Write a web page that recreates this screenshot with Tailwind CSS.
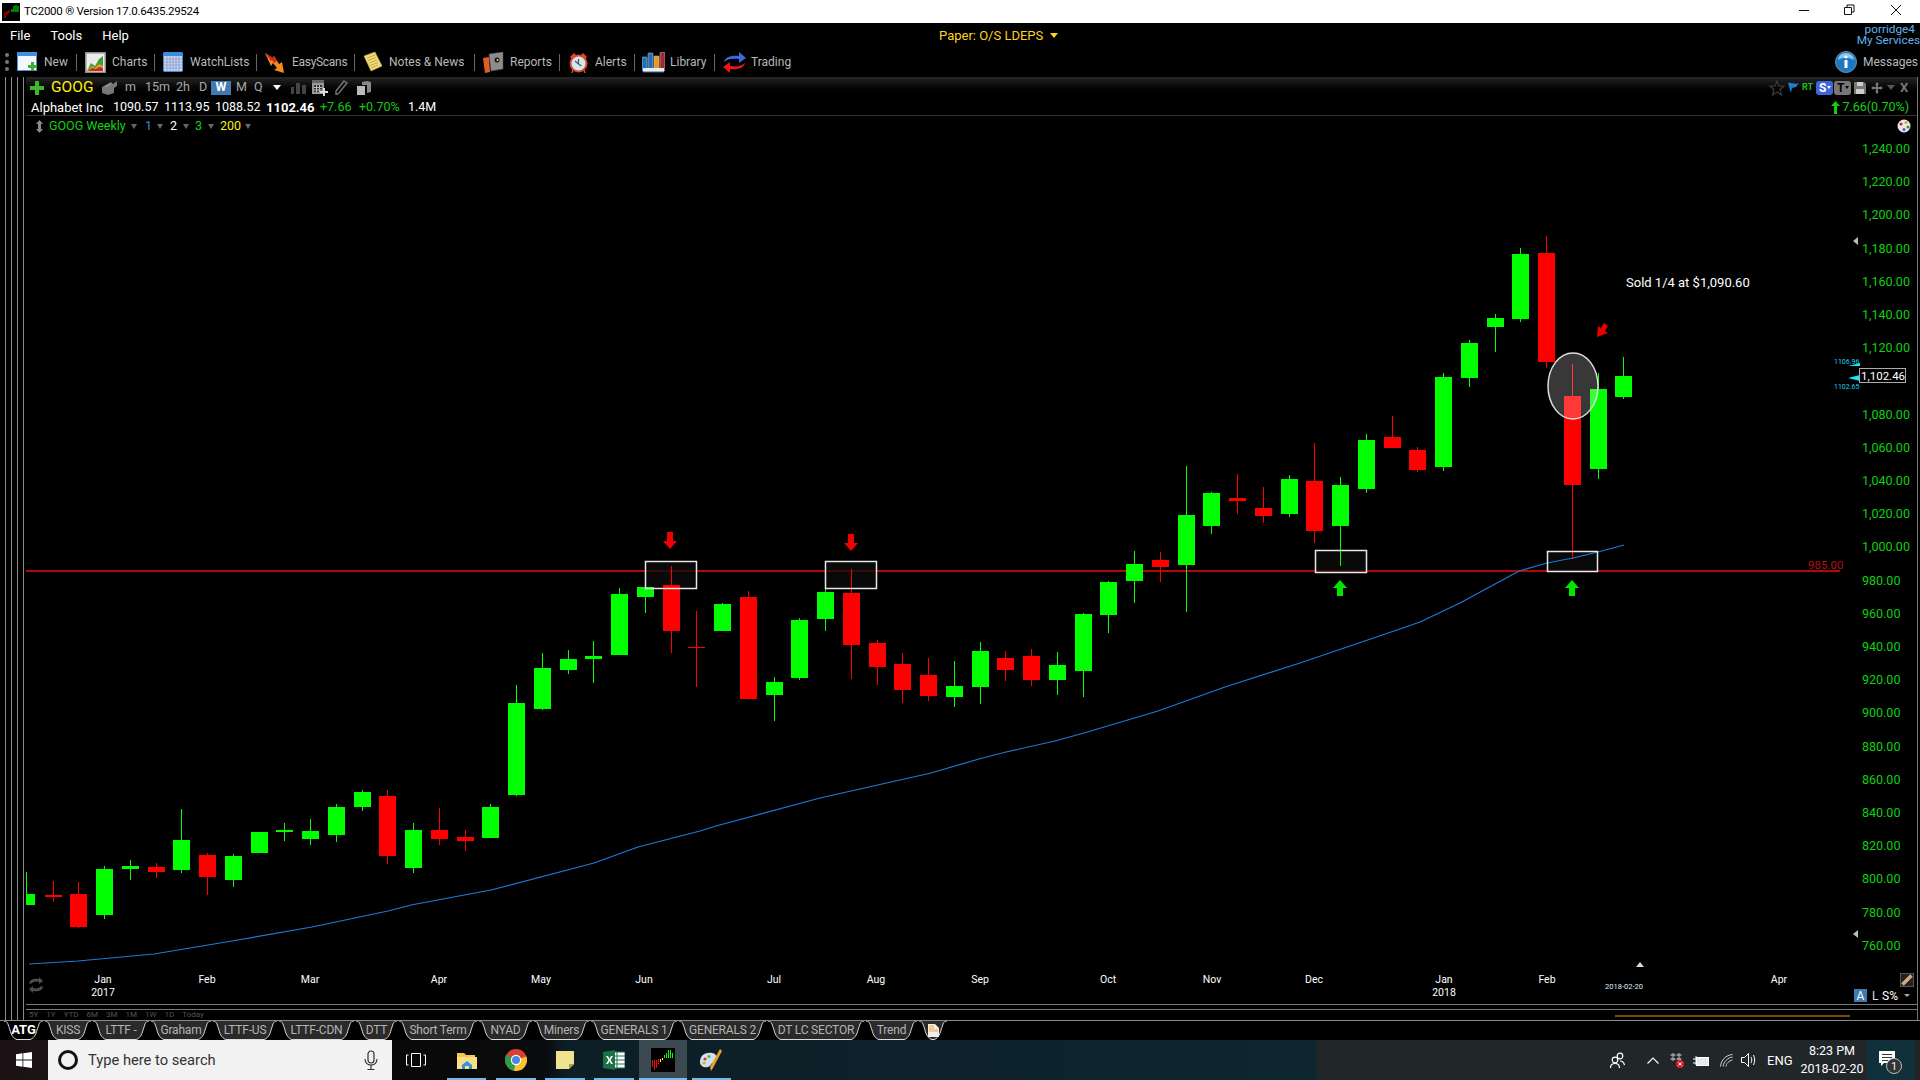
<!DOCTYPE html>
<html lang="en">

<head>
  <meta charset="UTF-8">
  <title>TC2000</title>
  <script src="https://cdn.jsdelivr.net/npm/@tailwindcss/browser@4"></script>
</head>

<body class="bg-black">
  <div class="w-[1920px] h-[1080px] overflow-hidden flex flex-col bg-black text-white text-[13px] leading-none whitespace-nowrap font-['Roboto',sans-serif]">

    <!-- title bar -->
    <div class="h-[23px] shrink-0 bg-white text-black flex items-center relative">
      <svg class="ml-[2px] w-[18px] h-[18px]" viewBox="0 0 18 18">
        <rect width="18" height="18" fill="#000" />
        <path d="M3 9v6M5 8v4M7 7v3" stroke="#f00" stroke-width="1" />
        <path d="M10 6v3M12 3v6M14 2v7M16 3v6" stroke="#0f0" stroke-width="1" />
      </svg>
      <span class="ml-[4px] text-[11.5px] tracking-[-0.25px]">TC2000 ® Version 17.0.6435.29524</span>
      <svg class="absolute left-[1799px] top-0 w-[110px] h-[23px]" viewBox="1799 0 110 23" fill="none" stroke="#111">
        <path d="M1799 10.5h10" />
        <path d="M1844.5 7.5h7v7h-7zM1847 7.5v-2.5h7v7h-2.5" />
        <path d="M1891 5l10 10M1901 5l-10 10" />
      </svg>
    </div>

    <!-- menu -->
    <div class="h-[23px] shrink-0 flex items-center relative pt-[2px] text-[13px] text-white">
      <span class="ml-[10px]">File</span>
      <span class="ml-[20px]">Tools</span>
      <span class="ml-[20px]">Help</span>
      <span class="absolute left-[939px] top-[6px] text-[#ffd21f]">Paper: O/S LDEPS</span>
      <span class="absolute left-[1050px] top-[10px] w-0 h-0 border-x-[4px] border-x-transparent border-t-[5px] border-t-[#ffd21f]"></span>
      <div class="absolute right-0 top-[1px] flex flex-col items-end text-[11.8px] text-[#62b1ef] leading-[11px]">
        <span class="mr-[5px]">porridge4</span>
        <span>My Services</span>
      </div>
    </div>

    <!-- toolbar -->
    <div class="h-[31px] shrink-0 flex items-center pt-px text-[12px] text-[#b9b9b9]">
      <div class="ml-[5px] w-[12px] flex flex-col gap-[3px]">
        <span class="w-[4px] h-[4px] rounded-full bg-[#777]"></span>
        <span class="w-[4px] h-[4px] rounded-full bg-[#777]"></span>
        <span class="w-[4px] h-[4px] rounded-full bg-[#777]"></span>
      </div>
      <!-- New -->
      <svg class="w-[20px] h-[20px]" viewBox="0 0 20 20">
        <rect x=".5" y=".5" width="19" height="18" fill="#f4f8fc" stroke="#4a90d9" />
        <rect x="1" y="1" width="18" height="3" fill="#3d8ee0" />
        <path d="M14 10h3v3h3v3h-3v3h-3v-3h-3v-3h3z" fill="#3aae3a" />
      </svg>
      <span class="ml-[7px] w-[24px]">New</span>
      <span class="ml-[8px] w-px h-[17px] bg-[#666]"></span>
      <!-- Charts -->
      <svg class="ml-[8px] w-[21px] h-[21px]" viewBox="0 0 21 21">
        <rect width="21" height="21" fill="#8c8c8c" />
        <rect x="1.500" y="1.500" width="18" height="18" fill="#ececec" />
        <path d="M2 19L6 11l4 3 4-7 4-3v15z" fill="#3f9e3a" />
        <path d="M2 19l5-5 3 2 4-4 4 2v5z" fill="#e8a01e" />
        <path d="M3 19l4-3 4 1 3-2 4 1v3z" fill="#c92a1c" />
      </svg>
      <span class="ml-[6px] w-[34px]">Charts</span>
      <span class="ml-[8px] w-px h-[17px] bg-[#666]"></span>
      <!-- WatchLists -->
      <svg class="ml-[8px] w-[20px] h-[20px]" viewBox="0 0 20 20">
        <rect x=".5" y=".5" width="19" height="19" rx="1" fill="#c9d6ee" stroke="#3a8ddb" />
        <rect x="1" y="1" width="18" height="3" fill="#3a8ddb" />
        <path d="M1 7h18M1 10h18M1 13h18M1 16h18M4 4v15M7 4v15M10 4v15M13 4v15M16 4v15" stroke="#8e99c9" stroke-width=".8" />
      </svg>
      <span class="ml-[7px] w-[56px]">WatchLists</span>
      <span class="ml-[10px] w-px h-[17px] bg-[#666]"></span>
      <!-- EasyScans -->
      <svg class="ml-[8px] w-[21px] h-[21px]" viewBox="0 0 21 21">
        <path d="M0 1l8 5 1-2 5 8 3-2 2 11-10-3 3-2-4-5-2 3z" fill="#f58a1f" />
        <path d="M0 1l8 5 1-2 3 5-3 2-2-3-1 1z" fill="#d8261b" />
      </svg>
      <span class="ml-[6px] w-[52px] tracking-[-0.3px]">EasyScans</span>
      <span class="ml-[10px] w-px h-[17px] bg-[#666]"></span>
      <!-- Notes -->
      <svg class="ml-[8px] w-[20px] h-[20px]" viewBox="0 0 20 20">
        <path d="M1 4l11-4 7 14-11 5z" fill="#f0dc7c" stroke="#c8a93c" stroke-width=".6" />
        <path d="M4 6l8-3M5 8.500l8-3M6 11l8-3M7 13.500l8-3M8 16l7-3" stroke="#b9953a" stroke-width=".8" />
      </svg>
      <span class="ml-[6px] w-[76px]">Notes &amp; News</span>
      <span class="ml-[9px] w-px h-[17px] bg-[#666]"></span>
      <!-- Reports -->
      <svg class="ml-[8px] w-[21px] h-[21px]" viewBox="0 0 21 21">
        <path d="M0 6l6-1 1 15-5 1z" fill="#e25b25" />
        <path d="M6 2l14-2v17L8 19z" fill="#8c8c8c" stroke="#555" stroke-width=".5" />
        <circle cx="14" cy="8" r="2.500" fill="#111" />
        <circle cx="14.500" cy="8" r="1" fill="#ddd" />
      </svg>
      <span class="ml-[6px] w-[41px]">Reports</span>
      <span class="ml-[8px] w-px h-[17px] bg-[#666]"></span>
      <!-- Alerts -->
      <svg class="ml-[9px] w-[19px] h-[21px]" viewBox="0 0 19 21">
        <circle cx="9.500" cy="11.500" r="8" fill="#cfe6f3" stroke="#e2482a" stroke-width="2" />
        <path d="M1 5l4-4 2 2-4 4zM18 5l-4-4-2 2 4 4z" fill="#e2482a" />
        <path d="M9.500 7v5l3 2M9.500 12L6 9" stroke="#555" fill="none" stroke-width="1.200" />
        <path d="M4 18l-1 3M15 18l1 3" stroke="#e2482a" stroke-width="1.500" />
      </svg>
      <span class="ml-[7px] w-[30px]">Alerts</span>
      <span class="ml-[9px] w-px h-[17px] bg-[#666]"></span>
      <!-- Library -->
      <svg class="ml-[7px] w-[23px] h-[21px]" viewBox="0 0 23 21">
        <rect x="0" y="5" width="5" height="14" rx="1" fill="#1f6fb8" stroke="#cfd7de" stroke-width=".5" />
        <rect x="6" y="1" width="5" height="18" rx="1" fill="#1f6fb8" stroke="#cfd7de" stroke-width=".5" />
        <rect x="12" y="4" width="5" height="15" rx="1" fill="#f09420" stroke="#cfd7de" stroke-width=".5" />
        <rect x="18" y="0" width="5" height="19" rx="1" fill="#a32828" stroke="#cfd7de" stroke-width=".5" />
        <path d="M1 16h21v4H1z" fill="#ececec" />
        <path d="M1 20h21" stroke="#1f6fb8" />
      </svg>
      <span class="ml-[5px] w-[36px]">Library</span>
      <span class="ml-[8px] w-px h-[17px] bg-[#666]"></span>
      <!-- Trading -->
      <svg class="ml-[8px] w-[23px] h-[21px]" viewBox="0 0 23 21">
        <path d="M1 10C2 5 8 3 16 4V0l7 6-7 5V7C9 6 4 7 1 10z" fill="#3b6ae0" />
        <path d="M22 11c-1 5-7 7-15 6v4l-7-6 7-5v4c7 1 12 0 15-3z" fill="#f01414" />
      </svg>
      <span class="ml-[5px]">Trading</span>
      <!-- Messages -->
      <svg class="ml-auto w-[22px] h-[22px]" viewBox="0 0 22 22">
        <circle cx="11" cy="11" r="10.500" fill="#1c78c0" stroke="#6c8fa8" />
        <path d="M3 9a8 7 0 0 1 16 0c-5-3-11-3-16 0z" fill="#8ec4e8" />
        <circle cx="11" cy="6" r="1.600" fill="#fff" />
        <rect x="9.500" y="9" width="3" height="8" fill="#fff" />
      </svg>
      <span class="ml-[6px] mr-[5px] w-[52px]">Messages</span>
    </div>

    <!-- main: side rails and chart window -->
    <div class="flex-1 min-h-0 flex relative">
      <div class="w-[26px] shrink-0 relative">
        <span class="absolute left-[5px] top-0 bottom-0 w-px bg-[#8a8a8a]"></span>
        <span class="absolute left-[11px] top-0 bottom-0 w-px bg-[#8a8a8a]"></span>
        <span class="absolute left-[17px] top-0 bottom-0 w-px bg-[#8a8a8a]"></span>
        <span class="absolute left-[23px] top-0 bottom-0 w-px bg-[#8a8a8a]"></span>
      </div>
      <div class="flex-1 min-w-0 flex flex-col border-r border-r-[#777] mr-[2px]">

        <!-- symbol row -->
        <div class="h-[20px] shrink-0 flex items-center pt-px bg-linear-to-b from-[#262626] to-black text-[#a8a8a8] text-[12.5px]">
          <svg class="ml-[4px] w-[14px] h-[14px]" viewBox="0 0 14 14">
            <path d="M5 0h4v5h5v4H9v5H5V9H0V5h5z" fill="#3dba2a" />
          </svg>
          <span class="ml-[7px] w-[44px] text-[15.5px] text-[#ffee10]">GOOG</span>
          <svg class="ml-[7px] w-[15px] h-[14px]" viewBox="0 0 15 14">
            <path d="M0 6l9-5 2 2 4-3v5l-3 2v5l-6 2-6-2z" fill="#777" />
            <path d="M3 6l6-3" stroke="#aaa" />
          </svg>
          <span class="ml-[8px] w-[11px]">m</span>
          <span class="ml-[9px] w-[23px]">15m</span>
          <span class="ml-[8px] w-[14px]">2h</span>
          <span class="ml-[9px] w-[9px]">D</span>
          <span class="ml-[3px] w-[20px] h-[14px] bg-[#3f7ab0] text-white font-bold flex items-center justify-center">W</span>
          <span class="ml-[5px] w-[11px]">M</span>
          <span class="ml-[7px] w-[10px]">Q</span>
          <span class="ml-[9px] w-0 h-0 border-x-[4px] border-x-transparent border-t-[5px] border-t-white"></span>
          <svg class="ml-[10px] w-[15px] h-[12px]" viewBox="0 0 15 12" fill="#444">
            <rect x="0" y="5" width="3" height="7" />
            <rect x="5" y="1" width="4" height="11" />
            <rect x="11" y="3" width="4" height="9" />
          </svg>
          <svg class="ml-[6px] w-[16px] h-[16px]" viewBox="0 0 16 16">
            <rect x="0" y="0" width="12" height="14" fill="#999" />
            <rect x="0" y="0" width="12" height="3" fill="#666" />
            <path d="M2 5h8v7H2z" fill="#333" />
            <path d="M2 7.500h8M2 10h8M4.500 5v7M7.500 5v7" stroke="#bbb" />
            <path d="M11 8h2v3h3v2h-3v3h-2v-3H8v-2h3z" fill="#ddd" />
          </svg>
          <svg class="ml-[7px] w-[13px] h-[15px]" viewBox="0 0 13 15">
            <path d="M9 1l3 2-8 10-3 2 0-4z" fill="none" stroke="#777" stroke-width="1.400" />
          </svg>
          <svg class="ml-[9px] w-[14px] h-[14px]" viewBox="0 0 14 14">
            <path d="M0 5h8v9H0z" fill="#bbb" />
            <path d="M5 1l5-1 4 1v10l-4 1V4L5 4z" fill="#888" />
          </svg>
          <div class="ml-auto flex items-center relative">
            <svg class="w-[16px] h-[16px]" viewBox="0 0 16 16">
              <path d="M8 1l2 5h5l-4 3.500 1.500 5.500L8 12l-4.500 3L5 9.500 1 6h5z" fill="none" stroke="#3c3c3c" stroke-width="1.200" />
            </svg>
            <svg class="ml-[3px] w-[11px] h-[11px]" viewBox="0 0 11 11">
              <path d="M0 1c3-1 7 2 11 0L8 5l-4 1-1 5z" fill="#1d7fd0" />
            </svg>
            <span class="ml-[3px] w-[11px] text-[9px] text-[#18c018] font-bold">RT</span>
            <span class="ml-[3px] w-[17px] h-[14px] rounded-[3px] bg-[#3f66d8] text-white text-[12px] font-bold flex items-center pl-[3px]">S<span class="ml-px w-0 h-0 border-x-[2px] border-x-transparent border-t-[3px] border-t-white"></span></span>
            <span class="ml-px w-[17px] h-[14px] rounded-[3px] bg-[#777] text-black text-[12px] font-bold flex items-center pl-[3px]">T<span class="ml-px w-0 h-0 border-x-[2px] border-x-transparent border-t-[3px] border-t-black"></span></span>
            <svg class="ml-[3px] w-[12px] h-[12px]" viewBox="0 0 12 12">
              <path d="M0 0h10l2 2v10H0z" fill="#777" />
              <path d="M3 0h6v4H3zM2 7h8v5H2z" fill="#ccc" />
            </svg>
            <svg class="ml-[5px] w-[12px] h-[12px]" viewBox="0 0 12 12">
              <path d="M6 0l2 2.500H7V5h2.500V4L12 6 9.500 8V7H7v2.500h1L6 12 4 9.500h1V7H2.500v1L0 6l2.500-2v1H5V2.500H4z" fill="#777" />
            </svg>
            <span class="ml-[4px] w-0 h-0 border-x-[4px] border-x-transparent border-t-[5px] border-t-[#555]"></span>
            <span class="ml-[5px] w-[9px] mr-[8px] text-[#777] text-[13px] font-bold">X</span>
          </div>
        </div>

        <!-- quote row -->
        <div class="h-[19px] shrink-0 flex items-center border-b border-b-[#333] text-[12.5px] pt-[2px]">
          <span class="ml-[5px] w-[82px] text-[13px]">Alphabet Inc</span>
          <span class="w-[51px]">1090.57</span>
          <span class="w-[51px]">1113.95</span>
          <span class="w-[51px]">1088.52</span>
          <span class="w-[54px] font-bold text-[13px]">1102.46</span>
          <span class="w-[39px] text-[#16c816]">+7.66</span>
          <span class="w-[49px] text-[#16c816]">+0.70%</span>
          <span>1.4M</span>
          <svg class="ml-auto w-[9px] h-[13px]" viewBox="0 0 9 13">
            <path d="M4.500 0L9 5H6v8H3V5H0z" fill="#0fd00f" />
          </svg>
          <span class="ml-[2px] mr-[8px] text-[#16d016] text-[12.5px]">7.66(0.70%)</span>
        </div>

        <!-- chart canvas -->
        <div class="flex-1 min-h-0 relative">
          <svg id="chart" class="absolute inset-0 w-[1892px] h-[884px]" viewBox="26 116 1892 884"></svg>

          <!-- study row sits on top of the chart -->
          <div class="absolute left-0 top-[2px] flex items-center text-[12.5px] h-[16px]">
            <svg class="ml-[10px] w-[7px] h-[13px]" viewBox="0 0 7 13">
              <path d="M3.500 0L7 4H5v5h2l-3.500 4L0 9h2V4H0z" fill="#8a8a8a" />
            </svg>
            <span class="ml-[6px] w-[76px] text-[#10d010]">GOOG Weekly</span>
            <span class="ml-[6px] w-0 h-0 border-x-[3px] border-x-transparent border-t-[5px] border-t-[#666]"></span>
            <span class="ml-[8px] w-[6px] text-[#2a8be0]">1</span>
            <span class="ml-[6px] w-0 h-0 border-x-[3px] border-x-transparent border-t-[5px] border-t-[#666]"></span>
            <span class="ml-[7px] w-[7px] text-white">2</span>
            <span class="ml-[6px] w-0 h-0 border-x-[3px] border-x-transparent border-t-[5px] border-t-[#666]"></span>
            <span class="ml-[6px] w-[7px] text-[#10d010]">3</span>
            <span class="ml-[6px] w-0 h-0 border-x-[3px] border-x-transparent border-t-[5px] border-t-[#666]"></span>
            <span class="ml-[6px] w-[20px] text-[#ffee10]">200</span>
            <span class="ml-[5px] w-0 h-0 border-x-[3px] border-x-transparent border-t-[5px] border-t-[#666]"></span>
          </div>
          <svg class="absolute left-[1871px] top-[3px] w-[14px] h-[14px]" viewBox="0 0 14 14">
            <circle cx="7" cy="7" r="6.500" fill="#e8e8e8" />
            <circle cx="4" cy="5" r="1.600" fill="#d22" />
            <circle cx="9" cy="3.500" r="1.500" fill="#e8a01e" />
            <circle cx="11" cy="8" r="1.500" fill="#2a9a2a" />
            <circle cx="7" cy="10.500" r="1.500" fill="#2a6ad0" />
          </svg>

          <!-- bottom right scale buttons -->
          <div class="absolute left-[1828px] top-[873px] flex items-center text-[12px]">
            <span class="w-[13px] h-[13px] bg-[#3f7ab0] text-white flex items-center justify-center">A</span>
            <span class="ml-[5px] w-[8px] text-[#ddd]">L</span>
            <span class="ml-[2px] w-[18px] text-white">S%</span>
            <span class="ml-[4px] w-0 h-0 border-x-[3px] border-x-transparent border-t-[3px] border-t-[#aaa]"></span>
          </div>
          <svg class="absolute left-[1874px] top-[857px] w-[14px] h-[14px]" viewBox="0 0 14 14">
            <rect x=".5" y=".5" width="13" height="13" fill="#222" stroke="#555" />
            <path d="M2.500 11.500l9-9" stroke="#d6ab7c" stroke-width="3.500" />
          </svg>
        </div>

        <!-- period strip -->
        <div class="h-[20px] shrink-0 relative">
          <div class="absolute inset-x-0 top-[4px] h-px bg-[#777]"></div>
          <div class="absolute inset-x-0 top-[9px] h-px bg-[#777]"></div>
          <div class="absolute left-[3px] top-[11px] flex text-[8px] text-[#555] gap-[8px]">
            <span>5Y</span><span>1Y</span><span>YTD</span><span>6M</span><span>3M</span><span>1M</span><span>1W</span><span>1D</span><span>Today</span>
          </div>
          <div class="absolute left-[1589px] top-[15px] w-[235px] h-[2px] bg-[#7a4a00]"></div>
        </div>
      </div>
    </div>

    <!-- workspace tabs -->
    <div id="tabs" class="h-[20px] shrink-0 flex border-t border-t-[#8a8a8a] pl-[3px]"></div>

    <!-- taskbar -->
    <div class="h-[40px] shrink-0 flex items-center relative bg-[linear-gradient(90deg,#1b1114_0,#1b1415_48px,#090909_392px,#0a0b0c_545px,#0c1e26_565px,#0e2630_1316px,#212629_1316px,#212629_1867px,#10303c_1867px,#10303c_1915px,#222_1915px)]">
      <div class="w-[48px] flex justify-center">
        <svg class="w-[16px] h-[16px]" viewBox="0 0 16 16" fill="#fff">
          <path d="M0 2.200l6.500-.9v6.300H0zM7.300 1.200L16 0v7.600H7.300zM0 8.400h6.500v6.300L0 13.800zM7.300 8.400H16V16l-8.700-1.200z" />
        </svg>
      </div>
      <div class="w-[344px] h-[40px] bg-[#f2f2f2] flex items-center text-[#333] text-[14.7px]">
        <svg class="ml-[9px] w-[22px] h-[22px]" viewBox="0 0 22 22">
          <circle cx="11" cy="11" r="8.500" fill="none" stroke="#111" stroke-width="3" />
        </svg>
        <span class="ml-[9px]">Type here to search</span>
        <svg class="ml-auto mr-[14px] w-[14px] h-[20px]" viewBox="0 0 14 20" fill="none" stroke="#333" stroke-width="1.200">
          <rect x="4" y="1" width="6" height="12" rx="3" />
          <path d="M1 9c0 8 12 8 12 0M7 15v4M3.500 19.500h7" />
        </svg>
      </div>
      <!-- task view -->
      <svg class="ml-[14px] w-[20px] h-[14px]" viewBox="0 0 20 14" fill="none" stroke="#fff">
        <path d="M5.500 .5h9v13h-9zM2.500 2h-2v10h2M17.500 2h2v10h-2" />
      </svg>
      <!-- explorer -->
      <svg class="ml-[31px] w-[20px] h-[17px]" viewBox="0 0 20 17">
        <path d="M0 1h7l2 2h9v13H0z" fill="#f5c84c" />
        <path d="M0 5h20v12H0z" fill="#fadf84" />
        <path d="M5 17v-4l5-4 5 4v4z" fill="#2b96e0" />
        <path d="M8 17v-3h4v3z" fill="#fadf84" />
      </svg>
      <!-- chrome -->
      <svg class="ml-[28px] w-[22px] h-[22px]" viewBox="0 0 22 22">
        <circle cx="11" cy="11" r="11" fill="#dc3e30" />
        <path d="M11 11L1.500 5.500A11 11 0 0 0 9 21.800z" fill="#2b9d4a" />
        <path d="M11 11l10.400-3.500A11 11 0 0 1 9 21.800z" fill="#f8c52c" />
        <circle cx="11" cy="11" r="5.200" fill="#fff" />
        <circle cx="11" cy="11" r="4" fill="#4a86e8" />
      </svg>
      <!-- sticky notes -->
      <svg class="ml-[29px] w-[18px] h-[18px]" viewBox="0 0 18 18">
        <path d="M0 0h18v13l-5 5H0z" fill="#f1e28f" />
        <path d="M18 13l-5 5v-5z" fill="#a89a55" />
      </svg>
      <!-- excel -->
      <svg class="ml-[29px] w-[22px] h-[20px]" viewBox="0 0 22 20">
        <rect x="9" y="2" width="13" height="16" fill="#fff" stroke="#1e7145" />
        <path d="M14 2v16M9 6h13M9 10h13M9 14h13" stroke="#1e7145" />
        <path d="M0 2l12-2v20L0 18z" fill="#1e7145" />
        <path d="M3 6l2 0 1.500 3L8 6h2l-2.500 4L10 14H8l-1.500-3L5 14H3l2.500-4z" fill="#fff" />
      </svg>
      <!-- TC2000 running -->
      <div class="ml-[14px] w-[48px] h-[40px] bg-[#3a4a50] flex items-center justify-center">
        <svg class="w-[24px] h-[24px]" viewBox="0 0 24 24">
          <rect width="24" height="24" fill="#000" />
          <path d="M1.500 12v7M3.500 12v10M5.500 12v8M7.500 11v5" stroke="#f00" />
          <path d="M9.500 11v3M11.500 10v2" stroke="#ff0" />
          <path d="M13.500 7v3M15.500 5v5M17.500 2v8M19.500 2v8M21.500 5v5" stroke="#0f0" />
        </svg>
      </div>
      <!-- paint -->
      <svg class="ml-[13px] w-[23px] h-[24px]" viewBox="0 0 23 24">
        <path d="M0 14c0-7 6-10 12-9 6 1 6 7 2 9-3 1-3 4-6 5-4 1-8-1-8-5z" fill="#cfe3ee" />
        <circle cx="5" cy="11" r="1.600" fill="#d9342b" />
        <circle cx="9" cy="8.500" r="1.500" fill="#5fb04a" />
        <circle cx="4" cy="15" r="1.500" fill="#e8a21e" />
        <path d="M20 1l2 2-9 17-2 3-1-4z" fill="#e8a030" />
      </svg>

      <!-- tray -->
      <div class="absolute left-[1610px] top-0 h-[40px] flex items-center text-white">
        <svg class="w-[15px] h-[16px]" viewBox="0 0 15 16" fill="none" stroke="#fff" stroke-width="1.200">
          <circle cx="10" cy="4" r="2.800" />
          <circle cx="5" cy="8" r="2.800" />
          <path d="M.5 16c0-6 9-6 9 0M10 9c3 0 4 2 4.500 4" />
        </svg>
        <svg class="ml-[22px] w-[12px] h-[7px]" viewBox="0 0 12 7" fill="none" stroke="#fff" stroke-width="1.200">
          <path d="M.5 6.500L6 1l5.500 5.500" />
        </svg>
        <svg class="ml-[11px] w-[14px] h-[15px]" viewBox="0 0 14 15">
          <path d="M0 2l3-2 3 2-3 2zM6 2l3-2 3 2-3 2zM0 6l3-2 3 2-3 2zM6 6l3-2 3 2-3 2z" fill="#999" />
          <circle cx="10" cy="11" r="4" fill="#e01f2d" />
          <path d="M8.500 9.500l3 3M11.500 9.500l-3 3" stroke="#fff" />
        </svg>
        <svg class="ml-[9px] w-[16px] h-[11px]" viewBox="0 0 16 11" fill="none" stroke="#fff">
          <rect x="3.500" y="2.500" width="12" height="8" fill="#fff" fill-opacity=".9" />
          <path d="M0 4h3M0 8h3M3 1v9" />
        </svg>
        <svg class="ml-[11px] w-[13px] h-[13px]" viewBox="0 0 13 13" fill="none" stroke="#ccc">
          <path d="M.5 12.500C1 6 6 1 12.500 .5M3 12.500C3.500 8 8 3.500 12.500 3M6 12.500C6 10 9 6.500 12.500 6" />
        </svg>
        <svg class="ml-[8px] w-[16px] h-[14px]" viewBox="0 0 16 14" fill="none" stroke="#fff">
          <path d="M.5 4.500h3l4-4v13l-4-4h-3zM10 4c1 2 1 4 0 6M12.500 2c1.500 3 1.500 7 0 10" />
        </svg>
        <span class="ml-[10px] text-[13px]">ENG</span>
      </div>
      <div class="absolute left-[1800px] top-0 w-[64px] h-[40px] flex flex-col items-center justify-center gap-[6px] text-[12.5px] text-white">
        <span>8:23 PM</span>
        <span>2018-02-20</span>
      </div>
      <svg class="absolute left-[1879px] top-[11px] w-[24px] h-[24px]" viewBox="0 0 24 24">
        <path d="M0 0h16v12H5l-3 3v-3H0z" fill="#fff" />
        <path d="M3 3.500h10M3 6.500h10M3 9.500h6" stroke="#333" />
        <circle cx="15" cy="15" r="7.500" fill="#333" stroke="#bbb" />
        <text x="15" y="19" fill="#eee" font-size="11" text-anchor="middle">1</text>
      </svg>
      <div class="absolute bottom-0 left-[447px] w-[39px] h-[2px] bg-[#76b9ed]"></div>
      <div class="absolute bottom-0 left-[496px] w-[40px] h-[2px] bg-[#76b9ed]"></div>
      <div class="absolute bottom-0 left-[545px] w-[40px] h-[2px] bg-[#76b9ed]"></div>
      <div class="absolute bottom-0 left-[594px] w-[40px] h-[2px] bg-[#76b9ed]"></div>
      <div class="absolute bottom-0 left-[639px] w-[48px] h-[2px] bg-[#76b9ed]"></div>
      <div class="absolute bottom-0 left-[692px] w-[39px] h-[2px] bg-[#76b9ed]"></div>
    </div>
  </div>

  <script>
    // [index, colour, bodyTop, bodyBottom, wickTop, wickBottom] in page pixels
    const candles = [
      [0, 'r', 895, 897, 881, 902], [1, 'r', 894, 927, 882, 928], [2, 'g', 869, 915, 866, 919],
      [3, 'g', 866, 869, 860, 880], [4, 'r', 867, 872, 863, 878], [5, 'g', 840, 870, 809, 873],
      [6, 'r', 855, 877, 853, 895], [7, 'g', 856, 880, 854, 887], [8, 'g', 832, 853, 832, 853],
      [9, 'g', 830, 832, 823, 841], [10, 'g', 831, 839, 819, 845], [11, 'g', 807, 835, 804, 842],
      [12, 'g', 792, 807, 790, 811], [13, 'r', 796, 856, 790, 864], [14, 'g', 830, 868, 823, 873],
      [15, 'r', 830, 839, 808, 845], [16, 'r', 837, 841, 830, 851], [17, 'g', 807, 838, 804, 838],
      [18, 'g', 703, 795, 685, 796], [19, 'g', 668, 709, 653, 710], [20, 'g', 659, 670, 650, 674],
      [21, 'g', 656, 659, 641, 683], [22, 'g', 594, 655, 588, 655], [23, 'g', 587, 597, 587, 613],
      [24, 'r', 585, 631, 566, 653], [25, 'r', 647, 648, 611, 687], [26, 'g', 604, 631, 603, 631],
      [27, 'r', 597, 699, 591, 699], [28, 'g', 682, 695, 677, 721], [29, 'g', 620, 678, 618, 680],
      [30, 'g', 592, 619, 588, 631], [31, 'r', 593, 645, 569, 679], [32, 'r', 643, 667, 640, 685],
      [33, 'r', 664, 690, 653, 703], [34, 'r', 675, 696, 658, 701], [35, 'g', 686, 697, 661, 707],
      [36, 'g', 651, 687, 642, 704], [37, 'r', 658, 670, 651, 681], [38, 'r', 656, 680, 649, 686],
      [39, 'g', 665, 680, 652, 695], [40, 'g', 614, 671, 613, 697], [41, 'g', 582, 615, 581, 633],
      [42, 'g', 564, 581, 551, 603], [43, 'r', 560, 567, 552, 582], [44, 'g', 515, 565, 466, 612],
      [45, 'g', 493, 526, 492, 534], [46, 'r', 498, 501, 474, 514], [47, 'r', 508, 516, 487, 523],
      [48, 'g', 479, 514, 475, 517], [49, 'r', 481, 531, 443, 543], [50, 'g', 485, 526, 477, 566],
      [51, 'g', 440, 489, 434, 493], [52, 'r', 437, 448, 416, 448], [53, 'r', 450, 470, 447, 472],
      [54, 'g', 377, 467, 373, 471], [55, 'g', 343, 378, 340, 387], [56, 'g', 318, 327, 314, 352],
      [57, 'g', 254, 319, 248, 322], [58, 'r', 253, 362, 236, 368], [59, 'r', 396, 485, 364, 559],
      [60, 'g', 389, 469, 373, 479], [61, 'g', 376, 397, 357, 399]
    ];
    const colours = { r: '#ff0000', g: '#00ff00' };
    const boxes = [[645, 561, 52, 28], [825, 561, 52, 28], [1315, 550, 52, 23], [1547, 551, 51, 21]];

    let s = '';
    // support line
    s += '<rect x="26" y="570" width="1814" height="2" fill="#b00808"/>';
    s += '<text x="1808" y="569" fill="#b81010" font-size="11.500">985.00</text>';
    // box fill goes under the candles, outline above them
    boxes.forEach(b => {
      s += `<rect x="${b[0]}" y="${b[1]}" width="${b[2]}" height="${b[3]}" fill="#0c0c0c" fill-opacity=".75"/>`;
    });

    // first candle is cut by the left edge
    s += '<rect x="26" y="894" width="9" height="11" fill="#00ff00"/><rect x="26" y="872" width="1" height="22" fill="#00ff00"/>';
    candles.forEach(c => {
      const cx = Math.round(52.7 + 25.75 * c[0]);
      const col = colours[c[1]];
      s += `<rect x="${cx}" y="${c[4]}" width="1" height="${c[5] - c[4]}" fill="${col}"/>`;
      s += `<rect x="${cx - 8}" y="${c[2]}" width="17" height="${c[3] - c[2]}" fill="${col}"/>`;
    });

    // 200 period average
    const ma = [[29, 964], [78, 961], [154, 954], [232, 941], [312, 927], [388, 911], [411, 905], [491, 890],
      [594, 863], [638, 847], [700, 831], [716, 826], [820, 798], [931, 773], [979, 759], [1006, 752], [1055, 741],
      [1084, 733], [1158, 711], [1225, 687], [1300, 663], [1397, 630], [1420, 622], [1460, 603], [1519, 571],
      [1547, 563], [1573, 558], [1598, 552], [1624, 545]];
    s += `<polyline points="${ma.map(p => p.join(',')).join(' ')}" fill="none" stroke="#1e7ad8" stroke-width="1.200"/>`;

    boxes.forEach(b => {
      s += `<rect x="${b[0] + .5}" y="${b[1] + .5}" width="${b[2] - 1}" height="${b[3] - 1}" fill="none" stroke="#e8e8e8" stroke-width="1.500"/>`;
    });

    // highlighted ellipse
    s += '<ellipse cx="1573" cy="386" rx="25" ry="33" fill="#fff" fill-opacity=".22" stroke="#ddd" stroke-width="1.500"/>';

    // arrows
    const down = x => `<path d="M${x - 3} 532h6v9h4l-7 8-7-8h4z" fill="#f00000"/>`;
    s += down(670);
    s += down(851).replace('532', '534');
    s += '<path d="M1340 580l7 8h-4v8h-6v-8h-4z" fill="#00e800"/><path d="M1572 580l7 8h-4v8h-6v-8h-4z" fill="#00e800"/>';
    s += '<path d="M1597 337l1-11 3 2 3-5 4 3-3 5 3 2z" fill="#e80000"/>';

    // price scale
    ['1,240.00', '1,220.00', '1,200.00', '1,180.00', '1,160.00', '1,140.00', '1,120.00', '', '1,080.00', '1,060.00',
      '1,040.00', '1,020.00', '1,000.00', '980.00', '960.00', '940.00', '920.00', '900.00', '880.00', '860.00',
      '840.00', '820.00', '800.00', '780.00', '760.00'].forEach((t, i) => {
        const y = 148.5 + 33.2 * i;
        if (t) s += `<text x="1862" y="${y + 4.5}" fill="#0fd00f" font-size="12.500">${t}</text>`;
      });

    // last price tags
    s += '<text x="1834" y="364" fill="#19d0f0" font-size="7">1106.96</text><text x="1834" y="389" fill="#19d0f0" font-size="7">1102.65</text>';
    s += '<path d="M1848 366l12-3v3zM1848 378l12-3v6z" fill="#10e8f8"/>';
    s += '<rect x="1859.500" y="368.500" width="46" height="14" fill="#000" stroke="#aaa"/><text x="1861" y="380" fill="#fff" font-size="11.500">1,102.46</text>';
    s += '<path d="M1853 241l5-4v8z" fill="#bbb"/><path d="M1853 934l5-4v8z" fill="#bbb"/>';

    // note
    s += '<text x="1626" y="287" fill="#fff" font-size="13">Sold 1/4 at $1,090.60</text>';

    // time axis
    [['Jan', 103], ['Feb', 207], ['Mar', 310], ['Apr', 439], ['May', 541], ['Jun', 644], ['Jul', 774], ['Aug', 876], ['Sep', 980],
      ['Oct', 1108], ['Nov', 1212], ['Dec', 1314], ['Jan', 1444], ['Feb', 1547], ['Apr', 1779]].forEach(t => {
        s += `<text x="${t[1]}" y="983" fill="#fff" font-size="10.500" text-anchor="middle">${t[0]}</text>`;
      });
    s += '<text x="103" y="996" fill="#fff" font-size="10.500" text-anchor="middle">2017</text>';
    s += '<text x="1444" y="996" fill="#fff" font-size="10.500" text-anchor="middle">2018</text>';
    s += '<text x="1624" y="989" fill="#dfeeff" font-size="7.500" text-anchor="middle">2018-02-20</text>';
    s += '<path d="M1640 960l4 5h-8z" fill="#ddd" transform="translate(0 2)"/>';
    // replay icon
    s += '<path d="M29 983c1-4 6-5 10-4v-2l4 4-4 3v-2c-3-1-7 0-8 2zM43 987c-1 4-6 5-10 4v2l-4-4 4-3v2c3 1 7 0 8-2z" fill="#4e4e4e"/>';
    document.getElementById('chart').innerHTML = s;

    // workspace tabs
    const tabs = [['ATG', 41], ['KISS', 48], ['LTTF -', 58], ['Graham', 62], ['LTTF-US', 66], ['LTTF-CDN', 77], ['DTT', 43],
      ['Short Term', 80], ['NYAD', 55], ['Miners', 57], ['GENERALS 1', 88], ['GENERALS 2', 89], ['DT LC SECTOR', 98], ['Trend', 53], ['', 30]];
    document.getElementById('tabs').innerHTML = tabs.map((t, i) => {
      const w = t[1];
      const shape = `M1 0C5 0 5 4 7 9 8 14 11 18 14 18.500H${w - 14}C${w - 11} 18 ${w - 8} 14 ${w - 7} 9 ${w - 5} 4 ${w - 5} 0 ${w - 1} 0`;
      const label = i === 0
        ? `<span class="relative -mt-[2px] font-bold text-white text-[13px]">${t[0]}</span>`
        : `<span class="relative -mt-[2px] tracking-[-0.2px] text-[#b4b4b4] text-[12px]">${t[0]}</span>`;
      const page = i === tabs.length - 1
        ? '<svg class="relative w-[11px] h-[13px]" viewBox="0 0 11 13"><path d="M0 0h7l4 4v9H0z" fill="#eee"/><path d="M1 1h5v4h4v3H1z" fill="#f5c98a"/></svg>'
        : '';
      return `<div class="relative h-[19px] flex items-center justify-center shrink-0" style="width:${w}px">
        <svg class="absolute inset-0 w-full h-[19px]" viewBox="0 0 ${w} 19"><path d="${shape}" fill="${i === 0 ? '#000' : '#2a2a2a'}" stroke="#dcdcdc"/></svg>
        ${label}${page}
      </div>`;
    }).join('');
  </script>
</body>

</html>
